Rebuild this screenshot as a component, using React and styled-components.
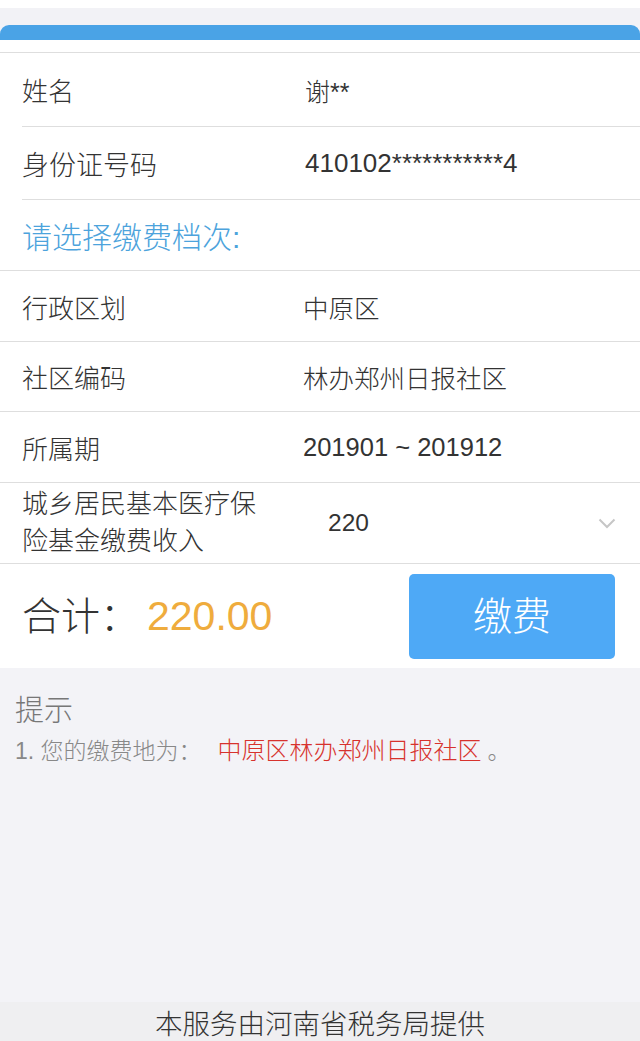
import React from "react";
import styled, { createGlobalStyle } from "styled-components";

const Global = createGlobalStyle`
  html, body { margin: 0; padding: 0; }
  body {
    background: #f3f3f7;
    font-family: "Liberation Sans", "Noto Sans CJK SC", sans-serif;
    font-weight: 300;
    color: #333;
  }
  * { box-sizing: border-box; }
`;

const Page = styled.div`
  min-height: 1041px;
  display: flex;
  flex-direction: column;
`;

const Strip = styled.div`
  height: 8px;
  background: #fff;
`;

const Gap = styled.div`
  height: 17px;
  background: #f2f2f6;
`;

const BlueBar = styled.div`
  height: 15px;
  background: #4aa3e6;
  border-radius: 9px 9px 0 0;
`;

const Card = styled.div`
  background: #fff;
`;

const CardTop = styled.div`
  height: 13px;
  border-bottom: 1px solid #dedede;
`;

const Row = styled.div`
  display: grid;
  grid-template-columns: ${(p) => (p.$inset ? "283px" : "281px")} 1fr;
  align-items: center;
  height: ${(p) => p.$h}px;
  margin-left: ${(p) => (p.$inset ? "22px" : "0")};
  padding-left: ${(p) => (p.$inset ? "0" : "22px")};
  border-bottom: 1px solid #dedede;
`;

const Label = styled.div`
  font-size: ${(p) => p.$size || 26}px;
  line-height: ${(p) => (p.$multi ? "37px" : "normal")};
  color: #333;
`;

const Value = styled.div`
  font-size: ${(p) => p.$size || 25.5}px;
  color: #333;
`;

const SectionTitle = styled.div`
  height: 71px;
  display: flex;
  align-items: center;
  padding-left: 22px;
  font-size: 30px;
  color: #4ca3dc;
  border-bottom: 1px solid #dedede;
`;

const SelectBox = styled.div`
  display: flex;
  align-items: center;
  justify-content: space-between;
  padding: 0 24px 0 25px;
  font-size: 24.5px;
  color: #333;
  height: 100%;
`;

const Summary = styled.div`
  height: 104px;
  display: flex;
  align-items: center;
  justify-content: space-between;
  padding: 0 25px 0 22px;
  background: #fff;
`;

const Total = styled.div`
  font-size: 39px;
  line-height: 1;
  color: #333;
  display: flex;
  align-items: baseline;
`;

const Amount = styled.span`
  color: #efac3d;
  margin-left: 8px;
  font-size: 41px;
`;

const PayButton = styled.button`
  width: 206px;
  height: 85px;
  border: none;
  border-radius: 5px;
  background: #4ea9f6;
  color: #fff;
  font-family: inherit;
  font-weight: 300;
  font-size: 39px;
  line-height: 1;
  margin-top: 1px;
  padding: 0;
`;

const Notice = styled.div`
  flex: 1;
  padding: 24px 15px 0;
`;

const NoticeTitle = styled.div`
  font-size: 29px;
  line-height: 38px;
  color: #777;
`;

const NoticeItem = styled.div`
  font-size: 23px;
  line-height: 32px;
  margin-top: 5px;
  color: #888;
`;

const Red = styled.span`
  color: #d7322d;
  font-size: 24px;
  margin-left: 16px;
  margin-right: 6px;
`;

const Footer = styled.div`
  height: 39px;
  background: #efeff1;
  display: flex;
  align-items: center;
  justify-content: center;
  font-size: 27.5px;
  color: #333;
`;

const Chevron = () => (
  <svg width="18" height="11" viewBox="0 0 18 11">
    <polyline points="1.5,1.5 9,9 16.5,1.5" fill="none" stroke="#c6c6c6" strokeWidth="2" />
  </svg>
);

export default function App() {
  return (
    <Page>
      <Global />
      <Strip />
      <Gap />
      <BlueBar />
      <Card>
        <CardTop />
        <Row $inset $h={74}>
          <Label $size={26}>姓名</Label>
          <Value $size={25}>谢**</Value>
        </Row>
        <Row $inset $h={73}>
          <Label $size={27}>身份证号码</Label>
          <Value $size={26}>410102***********4</Value>
        </Row>
        <SectionTitle>请选择缴费档次:</SectionTitle>
        <Row $h={71}>
          <Label>行政区划</Label>
          <Value>中原区</Value>
        </Row>
        <Row $h={70}>
          <Label>社区编码</Label>
          <Value>林办郑州日报社区</Value>
        </Row>
        <Row $h={71}>
          <Label>所属期</Label>
          <Value>201901 ~ 201912</Value>
        </Row>
        <Row $h={81}>
          <Label $multi>城乡居民基本医疗保<br />险基金缴费收入</Label>
          <SelectBox>
            <span>220</span>
            <Chevron />
          </SelectBox>
        </Row>
      </Card>
      <Summary>
        <Total>
          合计：<Amount>220.00</Amount>
        </Total>
        <PayButton>缴费</PayButton>
      </Summary>
      <Notice>
        <NoticeTitle>提示</NoticeTitle>
        <NoticeItem>
          1. 您的缴费地为：<Red>中原区林办郑州日报社区</Red>。
        </NoticeItem>
      </Notice>
      <Footer>本服务由河南省税务局提供</Footer>
    </Page>
  );
}
